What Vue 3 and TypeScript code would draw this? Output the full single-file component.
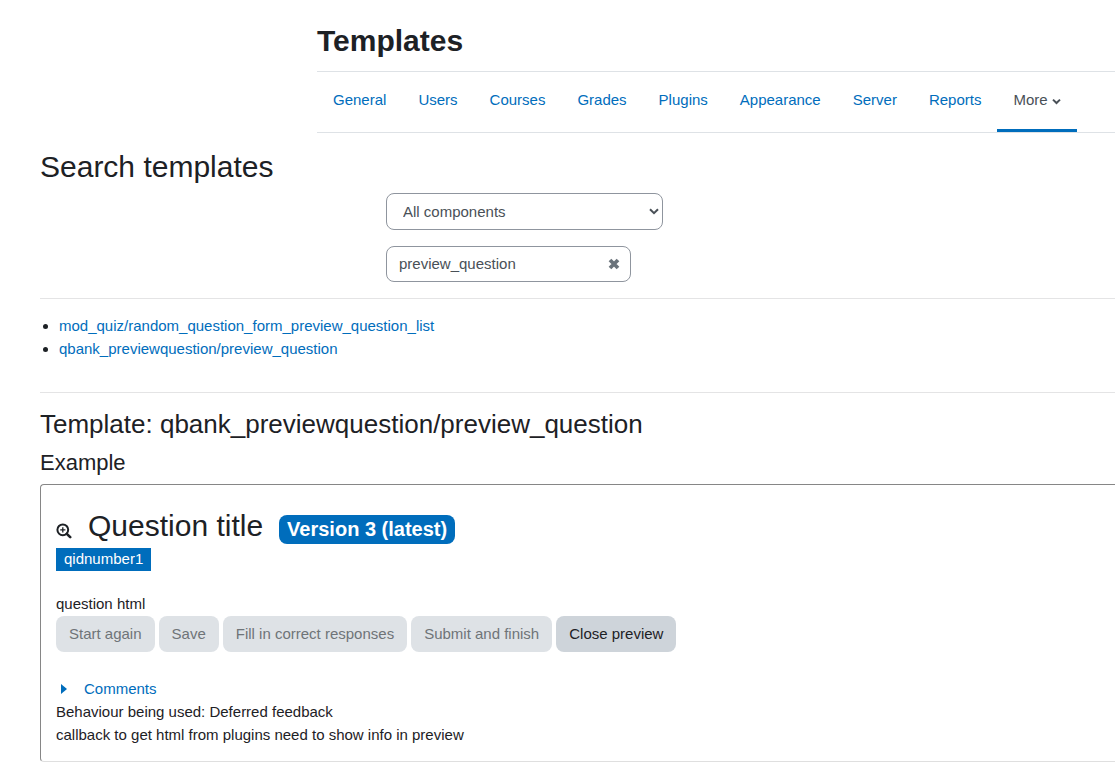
<script setup lang="ts">
import { ref } from 'vue'

const tabs: string[] = ['General', 'Users', 'Courses', 'Grades', 'Plugins', 'Appearance', 'Server', 'Reports']
const results: string[] = ['mod_quiz/random_question_form_preview_question_list', 'qbank_previewquestion/preview_question']
const disabledActions: string[] = ['Start again', 'Save', 'Fill in correct responses', 'Submit and finish']

const component = ref('all')
const query = ref('preview_question')
</script>

<template>
  <div class="page">
    <header class="header">
      <h1>Templates</h1>
      <nav class="tabs" aria-label="Site administration">
        <a v-for="tab in tabs" :key="tab" href="#" class="tab">{{ tab }}</a>
        <a href="#" class="tab active">
          More
          <svg class="chevron" viewBox="0 0 9 7" aria-hidden="true"><path d="M1 1.6 4.5 5 8 1.6" /></svg>
        </a>
      </nav>
    </header>

    <main>
      <section>
        <h2>Search templates</h2>
        <form class="search" @submit.prevent>
          <div class="select-wrap">
            <select v-model="component" aria-label="Component">
              <option value="all">All components</option>
            </select>
            <svg class="arrow" viewBox="0 0 10 7" aria-hidden="true"><path d="M1 1.2 5 5.2 9 1.2" /></svg>
          </div>
          <div class="input-wrap">
            <input v-model="query" type="text" aria-label="Search" />
            <button type="button" class="clear" aria-label="Clear search input" @click="query = ''">
              <svg viewBox="0 0 12 12" aria-hidden="true"><path d="M2 2 10 10M10 2 2 10" /></svg>
            </button>
          </div>
        </form>
      </section>
      <hr />
      <ul class="results">
        <li v-for="name in results" :key="name"><a href="#">{{ name }}</a></li>
      </ul>
      <hr />
      <section>
        <h3>Template: qbank_previewquestion/preview_question</h3>
        <h4>Example</h4>
        <div class="example">
          <div class="title-row">
            <svg class="zoom" viewBox="0 0 16 16" aria-hidden="true">
              <circle cx="6.8" cy="6.8" r="5.4" stroke-width="2" />
              <path d="M10.8 10.8 14.2 14.2" stroke-width="2.6" stroke-linecap="round" />
              <path d="M6.8 4.2v5.2M4.2 6.8h5.2" stroke-width="1.3" />
            </svg>
            <h2>Question title</h2>
            <span class="version">Version 3 (latest)</span>
          </div>
          <div class="idnumber">qidnumber1</div>
          <p class="question">question html</p>
          <div class="actions">
            <button v-for="action in disabledActions" :key="action" type="button" disabled>{{ action }}</button>
            <button type="button">Close preview</button>
          </div>
          <a href="#" class="comments">
            <svg viewBox="0 0 6 10" aria-hidden="true"><path d="M0 0 6 5 0 10z" /></svg>
            <span>Comments</span>
          </a>
          <p>Behaviour being used: Deferred feedback</p>
          <p>callback to get html from plugins need to show info in preview</p>
        </div>
      </section>
    </main>
  </div>
</template>

<style>
body {
  margin: 0;
  background: #fff;
}
</style>

<style scoped>
.page {
  padding: 23px 0 4px 40px;
  overflow: hidden;
  font-family: "Liberation Sans", Arial, sans-serif;
  font-size: 15px;
  line-height: 23px;
  color: #1d2125;
}
* {
  box-sizing: border-box;
}
h1, h2, h3, h4, p, ul {
  margin: 0;
}
h1, h2 {
  font-size: 30px;
  line-height: 36px;
}
h2, h3, h4 {
  font-weight: 400;
}
a {
  color: #006dbc;
  text-decoration: none;
}
.header {
  margin-left: 277px;
}
.tabs {
  display: flex;
  height: 62px;
  margin-top: 12px;
  border-top: 1px solid #dee2e6;
  border-bottom: 1px solid #dee2e6;
}
.tab {
  padding: 16px 16px 0;
  white-space: nowrap;
  border-bottom: 3px solid transparent;
}
.tab.active {
  color: #495057;
  border-bottom-color: #006dbc;
}
.chevron {
  width: 9px;
  height: 7px;
  fill: none;
  stroke: #495057;
  stroke-width: 2;
}
main {
  padding-top: 16px;
}
.search {
  display: grid;
  justify-items: start;
  gap: 16px;
  margin: 8px 0 16px;
  padding-left: 346px;
}
.select-wrap, .input-wrap {
  position: relative;
  width: 277px;
}
.input-wrap {
  width: 245px;
}
select, input {
  display: block;
  width: 100%;
  height: 37px;
  padding: 0 12px;
  border: 1px solid #8f959e;
  border-radius: 8px;
  background: #fff;
  color: #495057;
  font: inherit;
}
select {
  appearance: none;
  padding-left: 16px;
}
input {
  height: 36px;
  padding: 0 34px 2px 12px;
}
.arrow {
  position: absolute;
  top: 15px;
  right: 4px;
  width: 10px;
  height: 7px;
  fill: none;
  stroke: #495057;
  stroke-width: 2;
  pointer-events: none;
}
.clear {
  position: absolute;
  top: 0;
  right: 0;
  width: 34px;
  height: 36px;
  padding: 0;
  border: 0;
  background: none;
}
.clear svg {
  display: block;
  width: 12px;
  height: 12px;
  margin: auto;
  fill: none;
  stroke: #6a737b;
  stroke-width: 3.8;
}
hr {
  margin: 0;
  border: 0;
  border-top: 1px solid #e4e4e5;
}
.results {
  padding: 15px 0 32px 19px;
}
h3 {
  margin-top: 16px;
  font-size: 26px;
  line-height: 31px;
}
h4 {
  margin: 9px 0 7px;
  font-size: 22px;
  line-height: 28px;
}
.example {
  padding: 23px 15px 15px;
  border: 1px solid #868686;
  border-right: 0;
  border-bottom-color: #dfdfdf;
  border-radius: 4px 0 0 4px;
}
.title-row {
  display: flex;
  align-items: center;
}
.zoom {
  width: 16px;
  height: 16px;
  margin: 10px 16px 0 0;
  fill: none;
  stroke: #1d2125;
}
.version {
  margin: 7px 0 0 16px;
  padding: 0 8px;
  border-radius: 8px;
  background: #006dbc;
  color: #fff;
  font-size: 20px;
  font-weight: 700;
  line-height: 29px;
}
.idnumber {
  width: fit-content;
  margin-top: 4px;
  padding: 0 8px 2px;
  background: #006dbc;
  color: #fff;
  line-height: 21px;
}
.question {
  margin: 21px 0 1px;
}
.actions {
  display: flex;
  gap: 4px;
}
.actions button {
  height: 36px;
  padding: 0 13px 2px;
  border: 0;
  border-radius: 8px;
  background: #ced4da;
  color: #1d2125;
  font: inherit;
  white-space: nowrap;
}
.actions button:disabled {
  background: #dee2e6;
  color: #6f7478;
}
.comments {
  display: flex;
  align-items: center;
  gap: 17px;
  width: fit-content;
  margin-top: 26px;
  padding-left: 5px;
  line-height: 22px;
}
.comments svg {
  width: 6px;
  height: 10px;
  fill: #006dbc;
}
</style>
